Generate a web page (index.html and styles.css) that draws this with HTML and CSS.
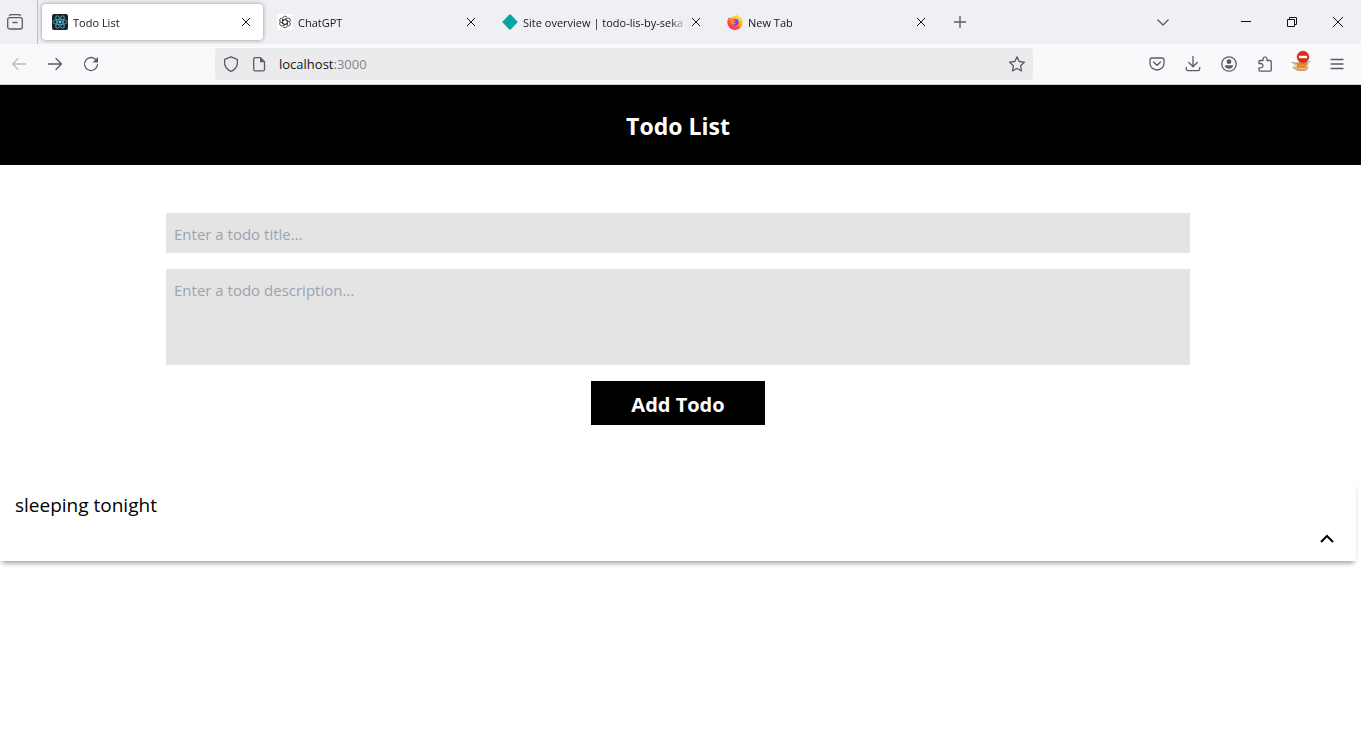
FILE: index.html
```html
<!DOCTYPE html>
<html lang="en">
<head>
<meta charset="utf-8">
<title>Todo List</title>
<link rel="stylesheet" href="styles.css">
</head>
<body>
<div class="tabstrip">
  <button class="view-button" aria-label="Firefox View">
    <svg class="icon" viewBox="0 0 16 16"><path d="M2.500 1.500Q3 .7 4 .7h8q1 0 1.500.8"/><rect x=".7" y="3.700" width="14.600" height="11.300" rx="2"/><path d="M6 8.500h4"/></svg>
  </button>
  <div class="tabs" role="tablist">
    <div class="tab tab-active" role="tab" aria-selected="true">
      <svg class="favicon" viewBox="0 0 16 16"><rect width="16" height="16" rx="2" fill="#20232a"/><g fill="none" stroke="#4fb3cc" stroke-width=".8"><ellipse cx="8" cy="8" rx="7" ry="2.700"/><ellipse cx="8" cy="8" rx="7" ry="2.700" transform="rotate(60 8 8)"/><ellipse cx="8" cy="8" rx="7" ry="2.700" transform="rotate(120 8 8)"/></g><circle cx="8" cy="8" r="1.400" fill="#61dafb"/></svg>
      <span class="tab-label">Todo List</span>
      <button class="tab-close" aria-label="Close tab"><svg class="cross" viewBox="0 0 10 10"><path d="M1 1l8 8M9 1L1 9"/></svg></button>
    </div>
    <div class="tab" role="tab">
      <svg class="favicon" viewBox="0 0 16 16"><rect width="16" height="16" rx="3" fill="#fff"/><g fill="none" stroke="#333" stroke-width=".9"><g id="knot"><path d="M8 5.300L10.400 6.700V11.300Q10.400 13.200 8.500 13.700Q7 14 6 12.900"/></g><use href="#knot" transform="rotate(60 8 8)"/><use href="#knot" transform="rotate(120 8 8)"/><use href="#knot" transform="rotate(180 8 8)"/><use href="#knot" transform="rotate(240 8 8)"/><use href="#knot" transform="rotate(300 8 8)"/></g></svg>
      <span class="tab-label">ChatGPT</span>
      <button class="tab-close" aria-label="Close tab"><svg class="cross" viewBox="0 0 10 10"><path d="M1 1l8 8M9 1L1 9"/></svg></button>
    </div>
    <div class="tab" role="tab">
      <svg class="favicon" viewBox="0 0 16 16"><path d="M7.400.6Q8 0 8.600.6l6.800 6.800q.6.600 0 1.200l-6.800 6.800q-.6.600-1.200 0L.6 8.600Q0 8 .6 7.400z" fill="#05a6a1"/></svg>
      <span class="tab-label">Site overview | todo-lis-by-seka</span>
      <button class="tab-close" aria-label="Close tab"><svg class="cross" viewBox="0 0 10 10"><path d="M1 1l8 8M9 1L1 9"/></svg></button>
    </div>
    <div class="tab" role="tab">
      <svg class="favicon" viewBox="0 0 16 16">
        <defs><linearGradient id="flame" x1=".85" y1=".1" x2=".2" y2=".95"><stop offset="0" stop-color="#fff04a"/><stop offset=".35" stop-color="#ffb52b"/><stop offset=".65" stop-color="#ff5a3c"/><stop offset="1" stop-color="#f0247a"/></linearGradient></defs>
        <path d="M10.300 0c.2 1.500 1 2.200 2 3 1-.2 1.200.1 1.800 1.100C15 5 15.700 6.500 15.700 8.300A7.700 7.700 0 0 1 .3 8.300C.3 6 1 4.300 2.200 2.900l.5 1.400C3.600 3.600 4.500 3.300 5.500 3.500 7 1.600 8.700 2.800 10.300 0z" fill="url(#flame)"/>
        <circle cx="8.300" cy="8.300" r="3.300" fill="#7a3fe0"/><path d="M3.500 5.500c2-.8 3.300-.2 4.300.9C9.300 6.500 9 7.500 7.500 7.900 6.700 8.300 7.300 9.600 9 9.300 7.600 11.600 4.500 11 3.500 8.500z" fill="#ff8a2c"/>
      </svg>
      <span class="tab-label">New Tab</span>
      <button class="tab-close" aria-label="Close tab"><svg class="cross" viewBox="0 0 10 10"><path d="M1 1l8 8M9 1L1 9"/></svg></button>
    </div>
  </div>
  <button class="new-tab" aria-label="New tab"><svg class="glyph" viewBox="0 0 14 14"><path d="M7 1v12M1 7h12"/></svg></button>
  <button class="list-tabs" aria-label="List all tabs"><svg class="glyph" viewBox="0 0 14 14"><path d="M1.500 4.500L7 10l5.500-5.500"/></svg></button>
  <div class="window-controls">
    <button class="window-button" aria-label="Minimize"><svg class="sys" viewBox="0 0 10 10"><path d="M0 4.500h10"/></svg></button>
    <button class="window-button" aria-label="Restore"><svg class="sys" viewBox="0 0 10 10"><path d="M.5 2.500h7v7h-7zM2.500 2.500v-2h7v7h-2"/></svg></button>
    <button class="window-button" aria-label="Close"><svg class="sys" viewBox="0 0 10 10"><path d="M0 0l10 10M10 0L0 10"/></svg></button>
  </div>
</div>
<div class="toolbar">
  <div class="tools">
    <button class="tool" aria-label="Back" disabled><svg class="icon" viewBox="0 0 16 16"><path d="M14.500 8h-13M7 2.500L1.500 8 7 13.500"/></svg></button>
    <button class="tool" aria-label="Forward"><svg class="icon" viewBox="0 0 16 16"><path d="M1.500 8h13M9 2.500L14.500 8 9 13.500"/></svg></button>
    <button class="tool" aria-label="Reload"><svg class="icon" viewBox="0 0 16 16"><path d="M13.500 4.500A6.500 6.500 0 1 0 14.500 8.500"/><path class="solid" d="M15 1v5.500H9.500z"/></svg></button>
  </div>
  <div class="urlbar">
    <svg class="icon" viewBox="0 0 16 16"><path d="M8 .8L14.300 3.300Q15 9 12.500 12 10.500 14.500 8 15.300 5.500 14.500 3.500 12 1 9 1.700 3.300z"/></svg>
    <svg class="icon" viewBox="0 0 16 16"><path d="M9.500 1.700H4Q2.700 1.700 2.700 3v10.500q0 1.300 1.300 1.300h8.200q1.300 0 1.300-1.300V5.700z"/><path class="solid" d="M9 1.500v4.700h4.700z"/></svg>
    <label class="address"><input class="address-input" type="text" value="localhost:3000" aria-label="Address"><span class="address-text" aria-hidden="true">localhost<span class="port">:3000</span></span></label>
    <svg class="icon" viewBox="0 0 16 16"><path d="M8 .9l2.200 4.600 5.100.7-3.700 3.500.9 5.200L8 12.500l-4.500 2.400.9-5.200L.7 6.200l5.100-.7z"/></svg>
  </div>
  <div class="tools">
    <button class="tool" aria-label="Save to Pocket"><svg class="icon" viewBox="0 0 16 16"><path d="M3 2h10q2 0 2 2v3.500a7 6.500 0 0 1-14 0V4q0-2 2-2zM4.500 6L8 9.300 11.500 6"/></svg></button>
    <button class="tool" aria-label="Downloads"><svg class="icon" viewBox="0 0 16 16"><path d="M8 .5v10M3.800 6.500L8 10.700l4.200-4.200M1.300 11.500V13q0 1.700 1.700 1.700h10q1.700 0 1.700-1.700v-1.500"/></svg></button>
    <button class="tool" aria-label="Account"><svg class="icon" viewBox="0 0 16 16"><circle cx="8" cy="8" r="7.200"/><circle class="solid" cx="8" cy="5.700" r="2.400"/><path class="solid" d="M3.800 9.300h8.400Q11.500 12.800 8 12.800T3.800 9.300z"/></svg></button>
    <button class="tool" aria-label="Extensions"><svg class="icon" viewBox="0 0 16 16"><path d="M2 7.500V5.500q0-1 1-1h3V2.800Q6.200.8 8 .8t2 2v1.700H13q1.200 0 1.200 1V14q0 1.200-1.200 1.200H3.200Q2 15.200 2 14V11.800H4Q6 11.500 6 9.700T4 7.500z"/></svg></button>
    <button class="tool" aria-label="Blocker"><svg class="blocker" viewBox="0 0 22 22"><path d="M3 13l5-1 11 1-3 6q-5 3-9 0z" fill="#e6c49a"/><path d="M7 13l8-1 3 1-3 5H7z" fill="#e8892a"/><path d="M3 17l5 3 7 0 3-3" fill="none" stroke="#d4a06c" stroke-width="2"/><path d="M1.500 12.500l6 1 13-2" fill="none" stroke="#999"/><circle cx="13" cy="7" r="6" fill="#df2a16" stroke="#b9583f" stroke-width=".6"/><path d="M9 7h8" stroke="#fff" stroke-width="2.400"/></svg></button>
    <button class="tool" aria-label="Menu"><svg class="icon" viewBox="0 0 16 16"><path d="M2 3.500h12M2 8h12M2 12.500h12"/></svg></button>
  </div>
</div>
<div class="app">
  <header class="app-header"><h1 class="app-title">Todo List</h1></header>
  <main class="content">
    <form class="todo-form">
      <input class="field" type="text" placeholder="Enter a todo title..." aria-label="Todo title">
      <textarea class="field field-tall" placeholder="Enter a todo description..." aria-label="Todo description"></textarea>
      <button class="add-button" type="button">Add Todo</button>
    </form>
    <article class="todo">
      <h2 class="todo-title">sleeping tonight</h2>
      <button class="todo-toggle" aria-label="Collapse"><svg class="chevron" viewBox="0 0 16 16"><path d="M2 11l6-6 6 6"/></svg></button>
    </article>
  </main>
</div>
</body>
</html>
```
FILE: styles.css
```css
* { box-sizing: border-box; }
body {
  min-height: 100vh;
  margin: 0;
  background: #fff;
  color: #000;
  font-family: "Open Sans", "Noto Sans", sans-serif;
}
button {
  display: flex;
  align-items: center;
  justify-content: center;
  padding: 0;
  border: 0;
  background: none;
  color: inherit;
  font: inherit;
}
svg { display: block; flex: none; }
.icon, .glyph, .cross, .sys, .chevron { fill: none; stroke: currentColor; }
.icon { width: 16px; height: 16px; stroke-width: 1.3; stroke-linecap: round; stroke-linejoin: round; }
.solid { fill: currentColor; stroke: none; }

.tabstrip {
  display: flex;
  height: 44px;
  background: #f0f0f4;
  color: #15141a;
  font-size: 11px;
}
.view-button {
  width: 38px;
  padding-right: 8px;
  border-right: 1px solid #bdbdc3;
  color: #5b5b66;
}
.tabs { display: flex; padding: 4px 2px; }
.tab {
  display: flex;
  align-items: center;
  gap: 5px;
  width: 221px;
  margin: 0 2px;
  padding: 0 5px 0 10px;
  border-radius: 4px;
}
.tab-active { background: #fff; box-shadow: 0 0 4px rgba(0, 0, 0, .4); }
.favicon { width: 16px; height: 16px; }
.tab-label {
  flex: 1;
  margin-right: -10px;
  white-space: nowrap;
  mask-image: linear-gradient(to right, #000 calc(100% - 20px), transparent);
}
.tab-close { width: 24px; height: 24px; }
.cross { width: 10px; height: 10px; }
.new-tab { width: 36px; color: #5b5b66; }
.glyph { width: 14px; height: 14px; stroke-width: 1.3; }
.list-tabs { width: 36px; margin-left: auto; margin-right: 42px; color: #5b5b66; }
.window-controls { display: flex; }
.window-button { width: 46px; }
.sys { width: 10px; height: 10px; }

.toolbar {
  display: flex;
  align-items: center;
  gap: 106px;
  height: 41px;
  padding: 0 6px 0 1px;
  border-bottom: 1px solid #ccccd1;
  background: #f9f9fb;
  color: #5b5b66;
}
.tools { display: flex; }
.tool { width: 36px; height: 32px; }
.tool:disabled { color: #bcbcc2; }
.blocker { width: 22px; height: 22px; margin-bottom: 6px; }
.urlbar {
  display: flex;
  flex: 1;
  align-items: center;
  gap: 12px;
  height: 32px;
  padding: 0 8px;
  border-radius: 4px;
  background: #ebebed;
}
.address { position: relative; flex: 1; font-size: 13px; line-height: 20px; }
.address-input {
  position: absolute;
  inset: 0;
  width: 100%;
  padding: 0;
  border: 0;
  background: none;
  color: transparent;
  font: inherit;
}
.address-text { color: #15141a; }
.port { color: #85858a; }

.app-header {
  display: flex;
  align-items: center;
  justify-content: center;
  height: 80px;
  padding: 2px 5px 0 0;
  background: #000;
  color: #fff;
}
.app-title { margin: 0; font-size: 23px; line-height: 32px; font-weight: 700; }
.content { padding-right: 5px; }
.todo-form {
  display: flex;
  flex-direction: column;
  align-items: center;
  gap: 16px;
  max-width: 1024px;
  margin: 0 auto;
  padding-top: 48px;
}
.field {
  width: 100%;
  height: 40px;
  padding: 9px 8px 7px;
  border: 0;
  border-radius: 0;
  outline: 0;
  background: #e4e4e4;
  font: inherit;
  font-size: 15px;
  line-height: 24px;
  resize: none;
}
.field::placeholder { color: #9ca3af; opacity: 1; }
.field-tall { display: block; height: 96px; }
.add-button {
  height: 44px;
  padding: 4px 40px 0;
  background: #000;
  color: #fff;
  font-size: 20px;
  line-height: 28px;
  font-weight: 700;
}
.todo {
  margin-top: 56px;
  padding: 10px 15px 6px;
  box-shadow: 0 4px 5px -2px rgba(0, 0, 0, .4);
}
.todo-title { margin: 0; font-size: 19px; line-height: 28px; font-weight: 400; }
.todo-toggle { width: 28px; height: 32px; margin: 4px 0 0 auto; }
.chevron { width: 16px; height: 16px; stroke-width: 2; }
```
